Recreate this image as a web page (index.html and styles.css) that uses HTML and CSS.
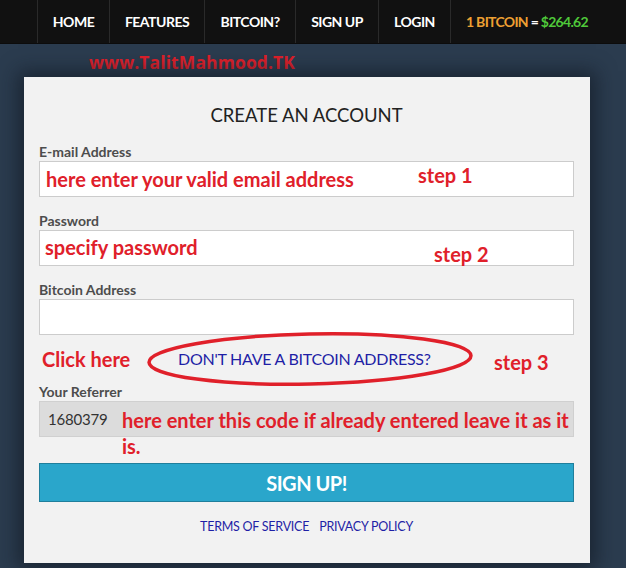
FILE: index.html
```html
<!DOCTYPE html>
<html>
<head>
<meta charset="utf-8">
<link rel="stylesheet" href="styles.css">
</head>
<body>
<nav class="topnav">
  <ul class="menu">
    <li class="menu-item w-home">HOME</li>
    <li class="menu-item w-feat">FEATURES</li>
    <li class="menu-item w-btc">BITCOIN?</li>
    <li class="menu-item w-sign">SIGN UP</li>
    <li class="menu-item w-login">LOGIN</li>
    <li class="menu-item price"><span class="btc">1 BITCOIN</span> = <span class="usd">$264.62</span></li>
  </ul>
</nav>
<div class="watermark">www.TalitMahmood.TK</div>
<main class="card">
  <h1 class="title">CREATE AN ACCOUNT</h1>
  <div class="group">
    <label class="label">E-mail Address</label>
    <div class="field">
      <span class="note note-email">here enter your valid email address</span>
      <span class="note step step1">step 1</span>
    </div>
  </div>
  <div class="group">
    <label class="label">Password</label>
    <div class="field">
      <span class="note note-pass">specify password</span>
      <span class="note step step2">step 2</span>
    </div>
  </div>
  <div class="group">
    <label class="label">Bitcoin Address</label>
    <div class="field"></div>
  </div>
  <div class="helprow">
    <span class="note click">Click here</span>
    <a class="nobtc">DON'T HAVE A BITCOIN ADDRESS?</a>
    <span class="note step step3">step 3</span>
    <svg class="ellipse" width="340" height="64" viewBox="0 0 340 64">
      <ellipse cx="170" cy="32" rx="161" ry="25" transform="rotate(-1.2 170 32)" fill="none" stroke="#e0202a" stroke-width="3.5"/>
    </svg>
  </div>
  <div class="group ref">
    <label class="label">Your Referrer</label>
    <div class="field grey">
      <span class="refcode">1680379</span>
      <span class="note note-ref">here enter this code if already entered leave it as it<br>is.</span>
    </div>
  </div>
  <button class="signup">SIGN UP!</button>
  <div class="links">
    <a class="link">TERMS OF SERVICE</a>
    <a class="link">PRIVACY POLICY</a>
  </div>
</main>
</body>
</html>
```
FILE: styles.css
```css
html, body {
  margin: 0;
  padding: 0;
}
body {
  background: #2b3c4f;
  font-family: Lato, "Open Sans", sans-serif;
  width: 626px;
  height: 568px;
  overflow: hidden;
}
.topnav {
  height: 43px;
  background: #111111;
  border-bottom: 1px solid #0c0c0c;
}
.menu {
  list-style: none;
  margin: 0;
  padding: 0 0 0 37px;
  display: flex;
  height: 43px;
}
.menu-item {
  box-sizing: border-box;
  border-left: 1px solid #2a2a2a;
  color: #ffffff;
  font-weight: 700;
  font-size: 14px;
  letter-spacing: -0.5px;
  line-height: 43px;
  white-space: nowrap;
  text-align: center;
}
.w-home { width: 72px; }
.w-feat { width: 95px; }
.w-btc { width: 91px; }
.w-sign { width: 83px; }
.w-login { width: 72px; }
.price { padding-left: 15px; text-align: left; letter-spacing: -0.7px; }
.btc { color: #eea033; }
.usd { color: #4fc93a; }
.watermark {
  height: 33px;
  line-height: 36px;
  padding-left: 89px;
  color: #e0202a;
  font-family: "Open Sans", Lato, sans-serif;
  font-weight: 700;
  font-size: 17.5px;
  letter-spacing: 0.1px;
}
.card {
  position: relative;
  margin-left: 24px;
  width: 566px;
  height: 486px;
  box-sizing: border-box;
  background: #f2f2f2;
  padding: 26px 16px 0 15px;
  box-shadow: 0 0 18px 6px rgba(15, 22, 32, 0.6);
}
.title {
  margin: 0;
  text-align: center;
  font-size: 18.5px;
  font-weight: 400;
  line-height: 24px;
  color: #222222;
}
.group {
  margin-top: 17px;
}
.group + .group { margin-top: 16px; }
.label {
  display: block;
  font-size: 14px;
  font-weight: 700;
  line-height: 16px;
  color: #4d4d4d;
  margin-bottom: 1px;
}
.field {
  position: relative;
  height: 34px;
  background: #ffffff;
  border: 1px solid #cccccc;
}
.field.grey {
  background: #dcdcdc;
  border-color: #d0d0d0;
}
.note {
  position: absolute;
  color: #e0202a;
  font-family: Lato, sans-serif;
  font-weight: 700;
  font-size: 20px;
  white-space: nowrap;
  line-height: 22px;
}
.note-email { left: 6px; top: 6px; }
.step1 { left: 378px; top: 2px; }
.note-pass { left: 5px; top: 5px; }
.step2 { left: 394px; top: 12px; }
.helprow {
  position: relative;
  height: 49px;
}
.click { left: 3px; top: 13px; }
.step3 { left: 455px; top: 16px; }
.nobtc {
  position: absolute;
  left: 139px;
  top: 15px;
  font-size: 16px;
  line-height: 18px;
  color: #1f1fa6;
  letter-spacing: -0.25px;
}
.ellipse {
  position: absolute;
  left: 101px;
  top: -8px;
}
.group.ref { margin-top: 0; }
.refcode {
  position: absolute;
  left: 8px;
  top: 8px;
  font-size: 15px;
  line-height: 18px;
  color: #333333;
  letter-spacing: -0.2px;
}
.note-ref {
  left: 82px;
  top: 5px;
  line-height: 26px;
}
.signup {
  display: block;
  margin-top: 26px;
  width: 100%;
  height: 39px;
  background: #2aa6cb;
  border: 1px solid #1f7f9c;
  color: #ffffff;
  font-family: Lato, sans-serif;
  font-weight: 700;
  font-size: 20px;
  letter-spacing: -0.5px;
  padding: 0;
}
.links {
  margin-top: 17px;
  display: flex;
  justify-content: center;
  gap: 10px;
}
.link {
  font-size: 12.5px;
  line-height: 16px;
  color: #1f1fa6;
  letter-spacing: -0.25px;
}
```
